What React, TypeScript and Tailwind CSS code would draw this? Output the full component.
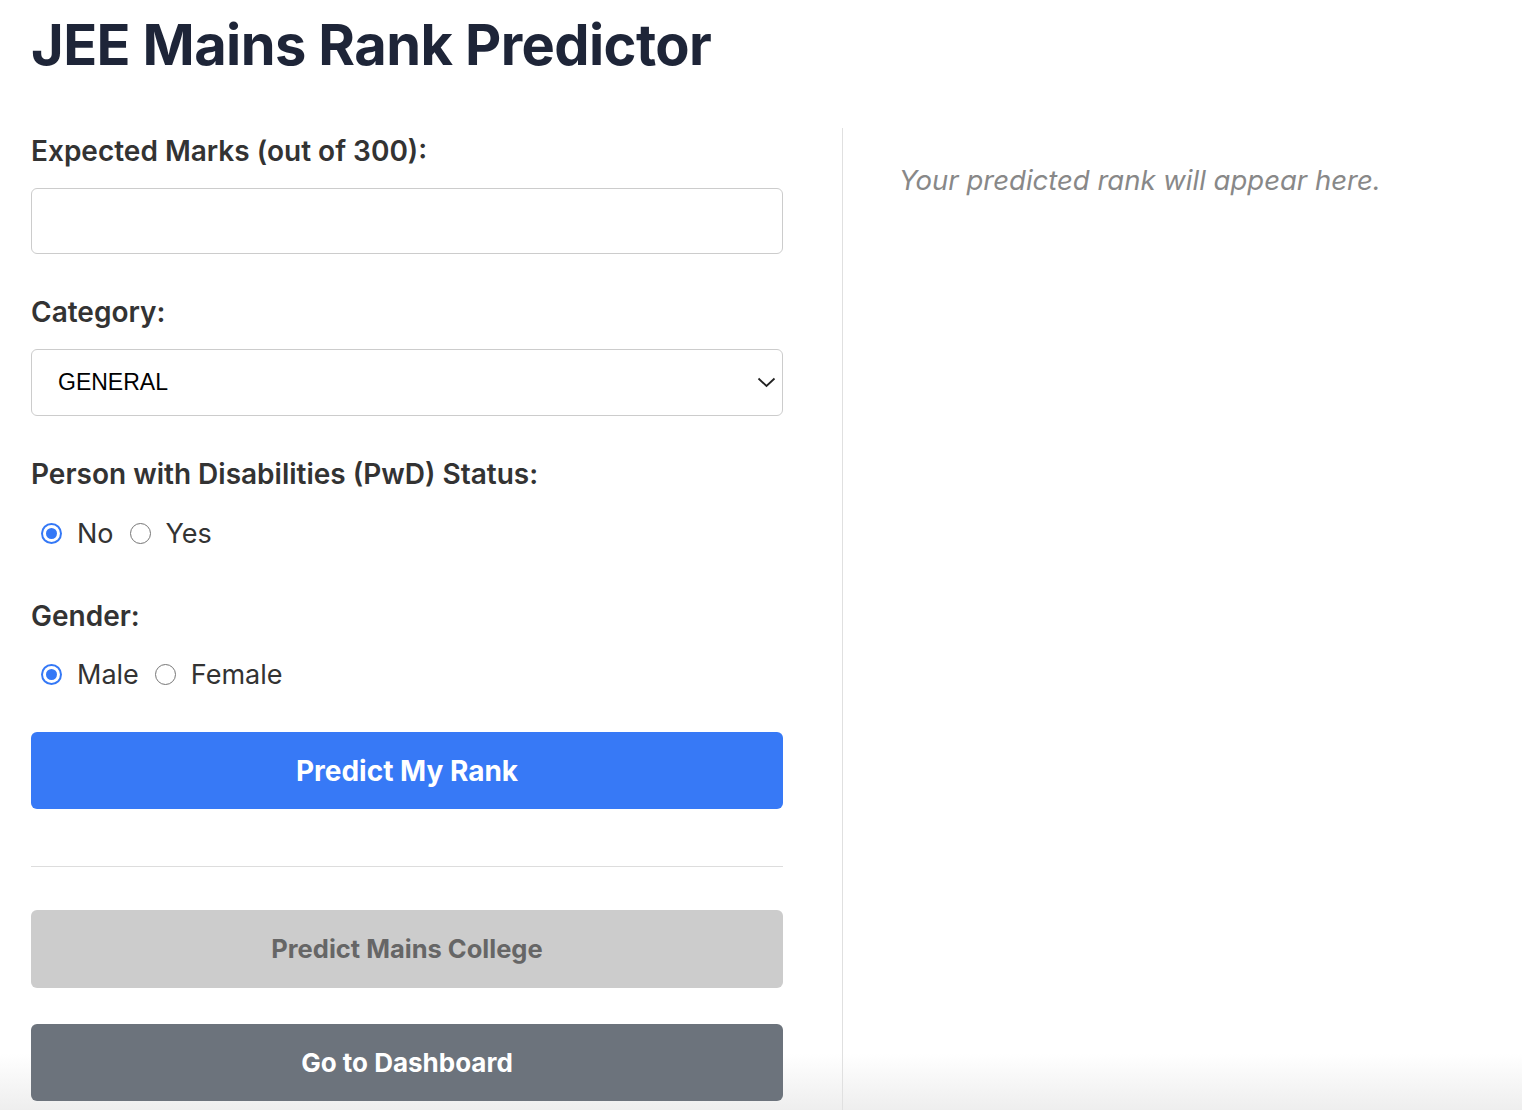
import { useState } from 'react';

function Radio({ checked, label, onClick }: { checked: boolean; label: string; onClick: () => void }) {
  return (
    <button type="button" onClick={onClick} className="flex items-center">
      <span
        className={`flex items-center justify-center w-[21px] h-[21px] rounded-full ml-[10px] mr-[15px] ${
          checked ? 'bg-[#3478f6]' : 'border-[1.5px] border-[#767676] bg-white'
        }`}
      >
        {checked && (
          <span className="flex items-center justify-center w-[17px] h-[17px] rounded-full bg-white">
            <span className="w-[11px] h-[11px] rounded-full bg-[#3478f6]" />
          </span>
        )}
      </span>
      <span className="text-[27px] text-[#333333] leading-none">{label}</span>
    </button>
  );
}

export default function App() {
  const [marks, setMarks] = useState('');
  const [pwd, setPwd] = useState<'No' | 'Yes'>('No');
  const [gender, setGender] = useState<'Male' | 'Female'>('Male');

  return (
    <div className="relative flex flex-col min-h-[1110px] bg-white font-['Inter','Noto_Sans',sans-serif] overflow-hidden">
      {/* bottom fade */}
      <div className="absolute inset-x-0 bottom-0 h-[56px] bg-gradient-to-b from-white to-[#eeeeee]" />

      <div className="relative flex-1 flex flex-col pl-[31px]">
        <h1 className="pt-[12px] text-[56px] leading-[66px] font-bold text-[#1e2538] tracking-[-0.6px]">
          JEE Mains Rank Predictor
        </h1>

        <div className="flex flex-1 mt-[50px]">
          <div className="w-[752px] shrink-0">
            <label className="block text-[28px] font-semibold text-[#333333] leading-[34px] pt-[6px]">
              Expected Marks (out of 300):
            </label>
            <input
              value={marks}
              onChange={(e) => setMarks(e.target.value)}
              className="mt-[20px] block w-full h-[66px] border border-[#cccccc] rounded-[6px] px-[26px] text-[22px] outline-none"
            />

            <label className="block mt-[41px] text-[28px] font-semibold text-[#333333] leading-[34px]">
              Category:
            </label>
            <div className="mt-[20px] relative flex items-center w-full h-[67px] border border-[#cccccc] rounded-[6px] px-[26px]">
              <span className="font-['Liberation_Sans',Arial,sans-serif] text-[23px] text-black">GENERAL</span>
              <svg className="absolute right-[6px] top-[26px]" width="19" height="12" viewBox="0 0 19 12" fill="none">
                <path d="M1.5 2.5 L9.5 10 L17.5 2.5" stroke="#222" strokeWidth="1.8" />
              </svg>
            </div>

            <label className="block mt-[41px] text-[28px] font-semibold text-[#333333] leading-[34px]">
              Person with Disabilities (PwD) Status:
            </label>
            <div className="mt-[28px] flex items-center gap-[6px] h-[28px]">
              <Radio checked={pwd === 'No'} label="No" onClick={() => setPwd('No')} />
              <Radio checked={pwd === 'Yes'} label="Yes" onClick={() => setPwd('Yes')} />
            </div>

            <label className="block mt-[52px] text-[28px] font-semibold text-[#333333] leading-[34px]">
              Gender:
            </label>
            <div className="mt-[27px] flex items-center gap-[6px] h-[28px]">
              <Radio checked={gender === 'Male'} label="Male" onClick={() => setGender('Male')} />
              <Radio checked={gender === 'Female'} label="Female" onClick={() => setGender('Female')} />
            </div>

            <button className="mt-[44px] w-full h-[77px] rounded-[6px] bg-[#3779f6] text-white text-[28px] font-bold">
              Predict My Rank
            </button>

            <div className="mt-[57px] h-px bg-[#dddddd]" />

            <button className="mt-[43px] w-full h-[78px] rounded-[6px] bg-[#cccccc] text-[#666666] text-[25.5px] font-bold">
              Predict Mains College
            </button>

            <button className="mt-[36px] w-full h-[77px] rounded-[6px] bg-[#6c737c] text-white text-[26px] font-bold">
              Go to Dashboard
            </button>
          </div>

          <div className="ml-[59px] flex-1 border-l border-[#e0e0e0] pl-[56px] pt-[34px]">
            <p className="text-[27.5px] italic text-[#888888] leading-[36px]">Your predicted rank will appear here.</p>
          </div>
        </div>
      </div>
    </div>
  );
}
